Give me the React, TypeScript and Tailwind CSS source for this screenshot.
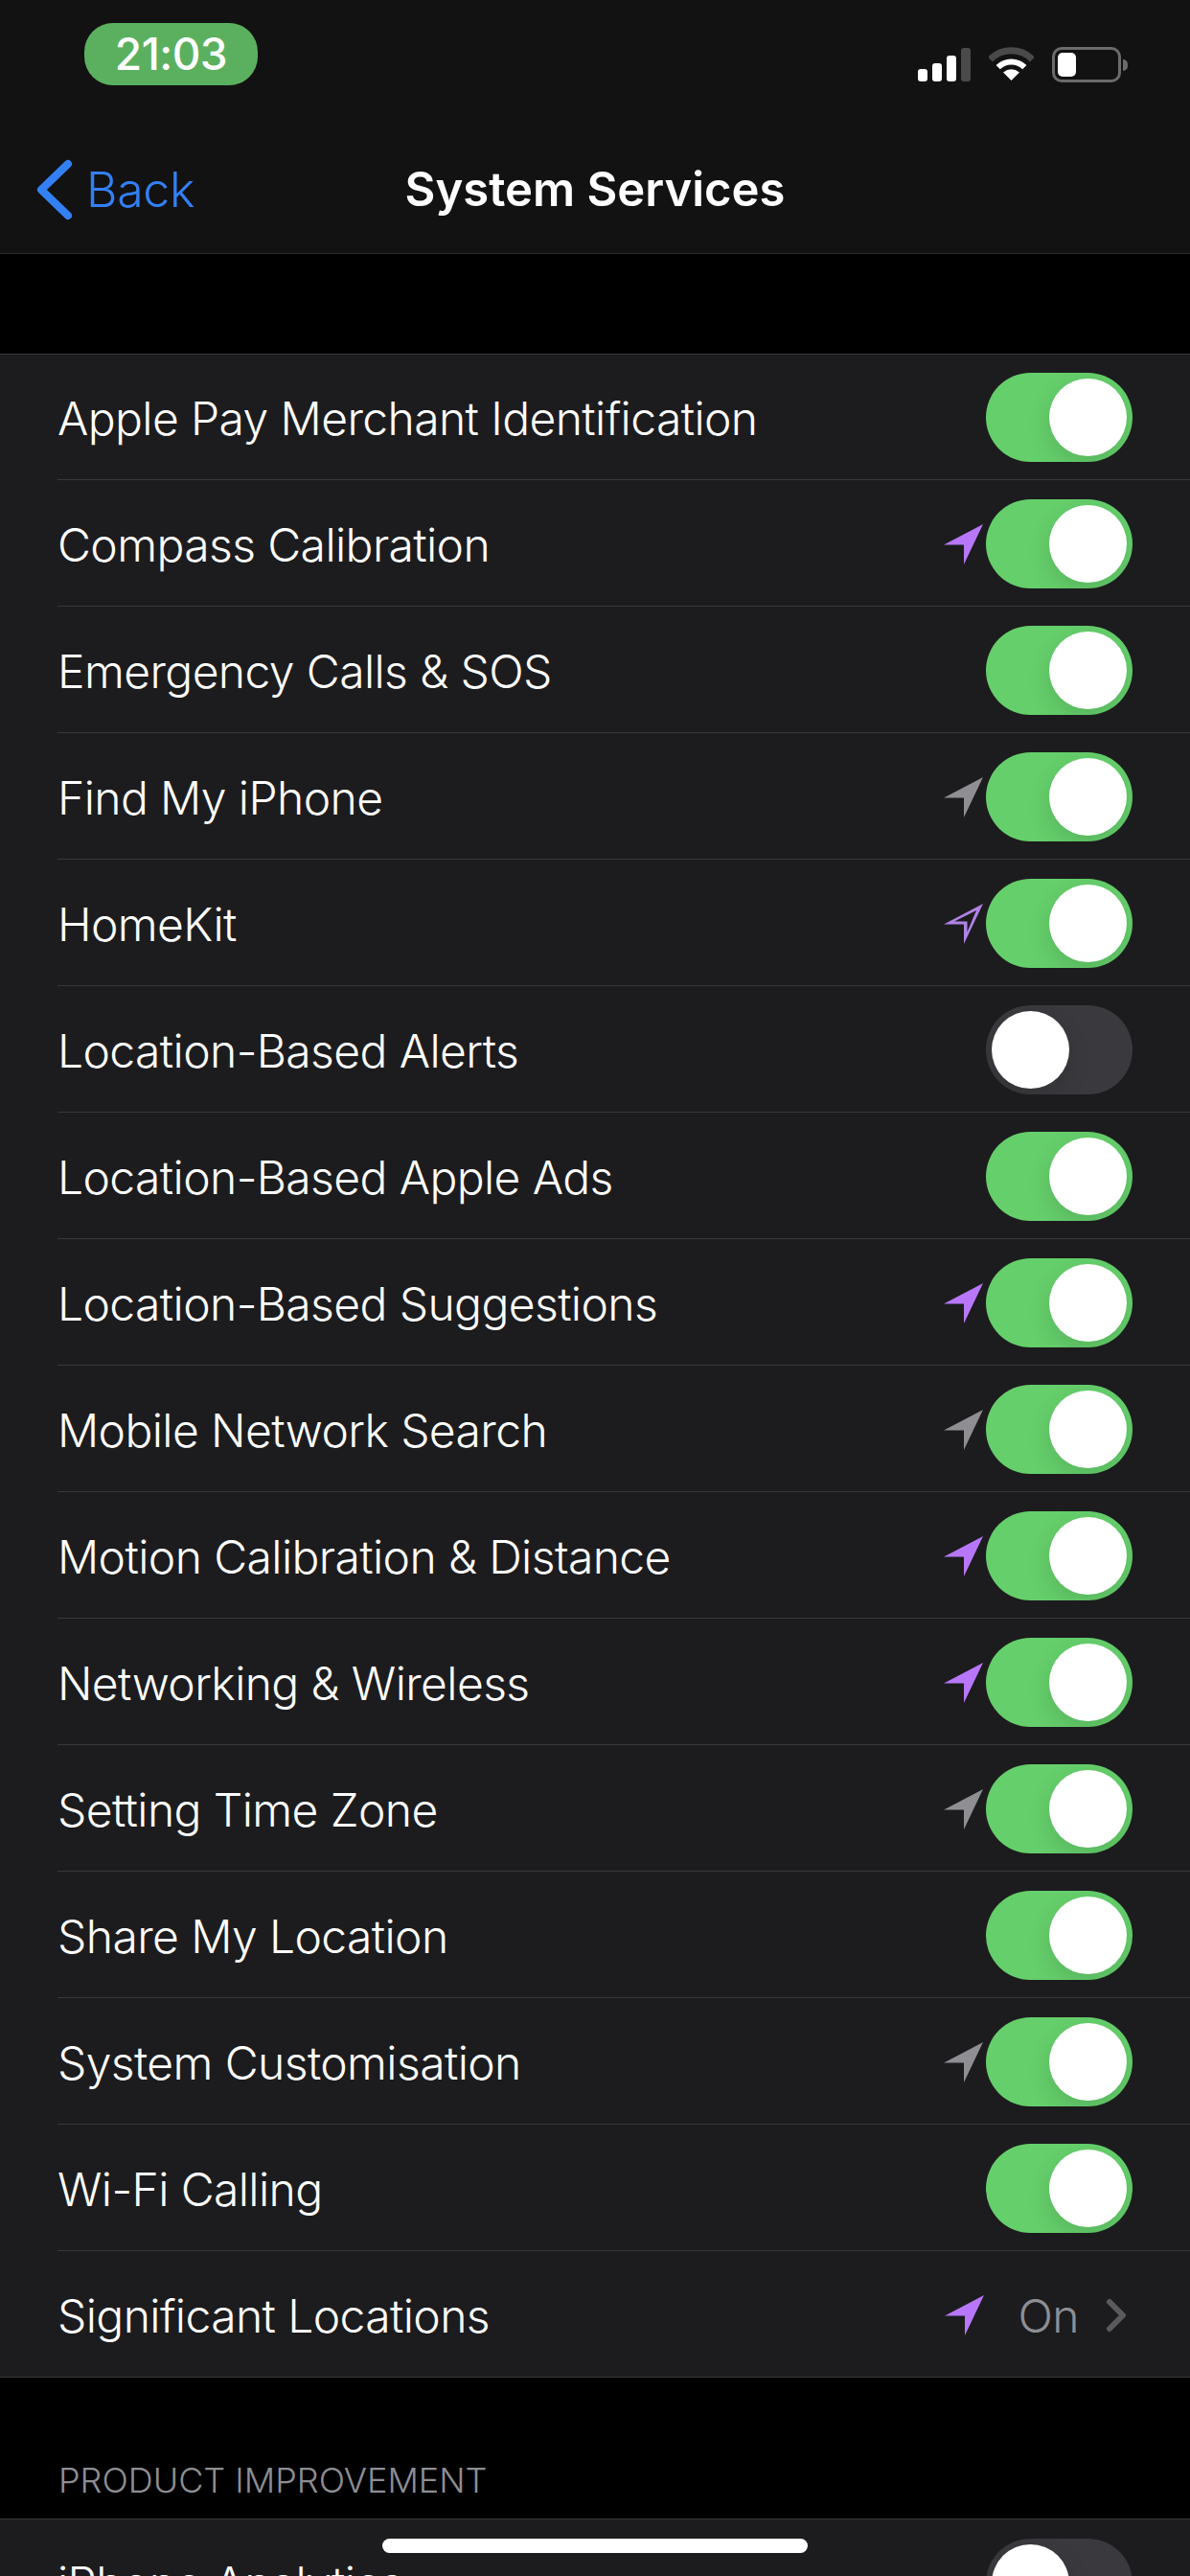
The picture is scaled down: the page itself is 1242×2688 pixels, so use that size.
type Arrow = 'solid' | 'gray' | 'outline' | null;

const services: { label: string; arrow: Arrow; on: boolean }[] = [
  { label: 'Apple Pay Merchant Identification', arrow: null, on: true },
  { label: 'Compass Calibration', arrow: 'solid', on: true },
  { label: 'Emergency Calls & SOS', arrow: null, on: true },
  { label: 'Find My iPhone', arrow: 'gray', on: true },
  { label: 'HomeKit', arrow: 'outline', on: true },
  { label: 'Location-Based Alerts', arrow: null, on: false },
  { label: 'Location-Based Apple Ads', arrow: null, on: true },
  { label: 'Location-Based Suggestions', arrow: 'solid', on: true },
  { label: 'Mobile Network Search', arrow: 'gray', on: true },
  { label: 'Motion Calibration & Distance', arrow: 'solid', on: true },
  { label: 'Networking & Wireless', arrow: 'solid', on: true },
  { label: 'Setting Time Zone', arrow: 'gray', on: true },
  { label: 'Share My Location', arrow: null, on: true },
  { label: 'System Customisation', arrow: 'gray', on: true },
  { label: 'Wi-Fi Calling', arrow: null, on: true },
];

function LocationArrow({ kind }: { kind: Exclude<Arrow, null> }) {
  if (kind === 'outline') {
    return (
      <svg width="41" height="42" viewBox="0 0 41 42" className="shrink-0">
        <path
          fillRule="evenodd"
          fill="#b083e8"
          d="M0 21.5 41 0 21 42V21.5ZM11 18.5H24.5V29.5L34 7Z"
        />
      </svg>
    );
  }
  return (
    <svg width="41" height="42" viewBox="0 0 41 42" className="shrink-0">
      <path fill={kind === 'solid' ? '#b877fb' : '#8e8e93'} d="M0 21.5 41 0 21 42V21.5Z" />
    </svg>
  );
}

function Toggle({ on }: { on: boolean }) {
  return (
    <div
      className={`flex h-[93px] w-[153px] shrink-0 items-center overflow-hidden rounded-full px-[6px] ${
        on ? 'justify-end bg-[#65cf6b]' : 'justify-start bg-[#3a3a3e]'
      }`}
    >
      <div className="h-[81px] w-[81px] rounded-full bg-white shadow-[0_9px_24px_rgba(0,0,0,0.13)]" />
    </div>
  );
}

function Row({ label, arrow, on }: { label: string; arrow: Arrow; on: boolean }) {
  return (
    <div className="ml-[60px] flex h-[132px] items-center border-b border-[#38383a] pr-[60px] pt-[2px] first:h-[131px] first:pt-[1px]">
      <span className="flex-1 pt-[2px] text-[48px] font-light tracking-[-0.6px] text-white">{label}</span>
      {arrow && (
        <span className="mr-[3px] flex">
          <LocationArrow kind={arrow} />
        </span>
      )}
      <Toggle on={on} />
    </div>
  );
}

function StatusIcons() {
  return (
    <div className="mt-[25px] flex items-start">
      <div className="flex h-[36px] items-end gap-[5px]">
        <div className="h-[13px] w-[10px] rounded-[3px] bg-white" />
        <div className="h-[19px] w-[10px] rounded-[3px] bg-white" />
        <div className="h-[27px] w-[10px] rounded-[3px] bg-white" />
        <div className="h-[35px] w-[10px] rounded-[3px] bg-[#4a4a4a]" />
      </div>
      <svg width="47" height="36" viewBox="0 0 47 36" className="ml-[19px]">
        <path d="M1.5 13A31 31 0 0 1 45.500 13" fill="none" stroke="#4a4a4a" strokeWidth="7" />
        <path d="M9.700 21.200A19.500 19.500 0 0 1 37.300 21.200" fill="none" stroke="#fff" strokeWidth="6" />
        <path d="M23.500 35 15 26.500Q23.500 20 32 26.500Z" fill="#fff" />
      </svg>
      <div className="ml-[19px] flex items-center">
        <div className="flex h-[37px] w-[72px] items-stretch rounded-[10px] border-[3px] border-[#6b6b6b] p-[3px]">
          <div className="w-[19px] rounded-[5px] bg-white" />
        </div>
        <div className="ml-[2px] h-[12px] w-[5px] rounded-r-full bg-[#6b6b6b]" />
      </div>
    </div>
  );
}

export default function App() {
  return (
    <div
      className="relative h-[2688px] w-[1242px] overflow-hidden bg-black text-white"
      style={{ fontFamily: 'Inter, "Noto Sans", sans-serif' }}
    >
      {/* Nav */}
      <div className="h-[265px] border-b border-[#2c2c2e] bg-[#121212]">
        <div className="flex h-[132px] items-start justify-between pl-[88px] pr-[65px] pt-[24px]">
          <div className="flex h-[65px] w-[181px] items-center justify-center rounded-[30px] bg-[#5bb05f] text-[46px] font-medium tracking-[-0.5px]">
            21:03
          </div>
          <StatusIcons />
        </div>
        <div className="grid h-[132px] grid-cols-[1fr_auto_1fr] items-center">
          <div className="flex items-center pl-[38px]">
            <svg width="38" height="64" viewBox="0 0 38 64">
              <path
                d="M33 5 5 32l28 27"
                fill="none"
                stroke="#3380f4"
                strokeWidth="8"
                strokeLinecap="round"
                strokeLinejoin="round"
              />
            </svg>
            <span className="ml-[14px] text-[50px] font-light tracking-[-0.3px] text-[#3380f4]">Back</span>
          </div>
          <div className="text-[49px] font-semibold">System Services</div>
          <div />
        </div>
      </div>

      <div className="h-[104px]" />

      {/* Main list */}
      <div className="border-y border-[#38383a] bg-[#1c1c1e]">
        {services.map((s) => (
          <Row key={s.label} label={s.label} arrow={s.arrow} on={s.on} />
        ))}
        <div className="ml-[60px] flex h-[131px] items-center pr-[66px] pt-[2px]">
          <span className="flex-1 pt-[2px] text-[48px] font-light tracking-[-0.6px]">Significant Locations</span>
          <LocationArrow kind="solid" />
          <span className="ml-[36px] pt-[2px] text-[48px] font-light tracking-[-0.6px] text-[#8e8e93]">On</span>
          <svg width="22" height="36" viewBox="0 0 22 36" className="ml-[28px]">
            <path
              d="M4 4l14 14L4 32"
              fill="none"
              stroke="#5a5a5e"
              strokeWidth="6"
              strokeLinecap="round"
              strokeLinejoin="round"
            />
          </svg>
        </div>
      </div>

      <div className="flex h-[147px] items-end pb-[13px] pl-[61px] text-[36px] font-light text-[#8e8e93]">
        PRODUCT IMPROVEMENT
      </div>

      <div className="border-t border-[#38383a] bg-[#1c1c1e]">
        <div className="ml-[60px] flex h-[132px] items-center pr-[60px]">
          <span className="flex-1 pt-[2px] text-[48px] font-light tracking-[-0.6px]">iPhone Analytics</span>
          <Toggle on={false} />
        </div>
      </div>

      {/* Home indicator */}
      <div className="absolute left-[399px] top-[2649px] h-[15px] w-[444px] rounded-full bg-white" />
    </div>
  );
}
